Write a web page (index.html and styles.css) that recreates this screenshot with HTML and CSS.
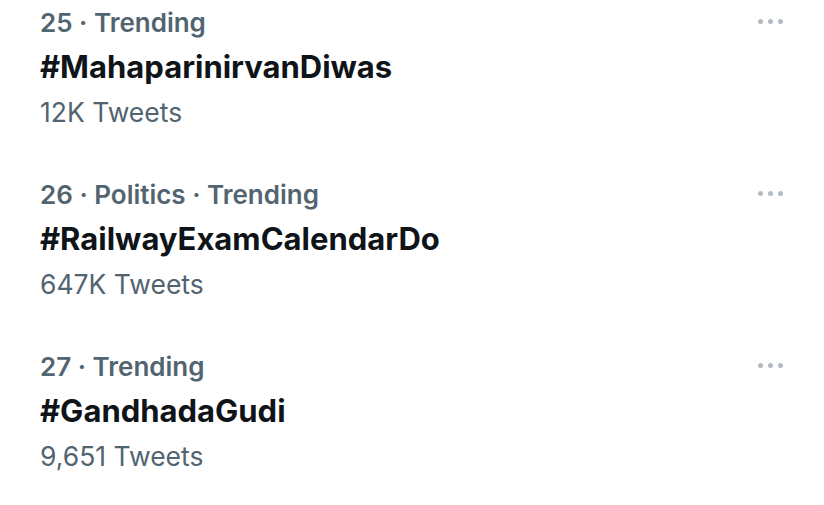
FILE: index.html
```html
<!DOCTYPE html>
<html>
<head>
<meta charset="utf-8">
<link rel="stylesheet" href="styles.css">
</head>
<body>
<div class="list">
  <div class="trend">
    <div class="info">
      <div class="meta">25 · Trending</div>
      <div class="tag">#MahaparinirvanDiwas</div>
      <div class="count">12K Tweets</div>
    </div>
    <div class="more"><span></span><span></span><span></span></div>
  </div>
  <div class="trend">
    <div class="info">
      <div class="meta">26 · Politics · Trending</div>
      <div class="tag">#RailwayExamCalendarDo</div>
      <div class="count">647K Tweets</div>
    </div>
    <div class="more"><span></span><span></span><span></span></div>
  </div>
  <div class="trend">
    <div class="info">
      <div class="meta">27 · Trending</div>
      <div class="tag">#GandhadaGudi</div>
      <div class="count">9,651 Tweets</div>
    </div>
    <div class="more"><span></span><span></span><span></span></div>
  </div>
</div>
</body>
</html>
```
FILE: styles.css
```css
html, body {
  margin: 0;
  padding: 0;
  background: #ffffff;
}
body {
  font-family: Inter, "Noto Sans", sans-serif;
  width: 824px;
  height: 505px;
  overflow: hidden;
}
.list {
  display: flex;
  flex-direction: column;
  gap: 39px;
  padding: 2px 41px 0 40px;
}
.trend {
  display: flex;
  justify-content: space-between;
  align-items: flex-start;
}
.info {
  display: flex;
  flex-direction: column;
}
.meta {
  font-size: 26px;
  font-weight: 600;
  color: #536471;
  line-height: 41px;
}
.tag {
  font-size: 31px;
  font-weight: 700;
  color: #0f1419;
  line-height: 47px;
}
.count {
  font-size: 26.5px;
  font-weight: 400;
  color: #536471;
  line-height: 45px;
}
.more {
  display: flex;
  gap: 5px;
  padding-top: 17px;
}
.more span {
  width: 5px;
  height: 5px;
  border-radius: 50%;
  background: #b3bbc2;
}
```
